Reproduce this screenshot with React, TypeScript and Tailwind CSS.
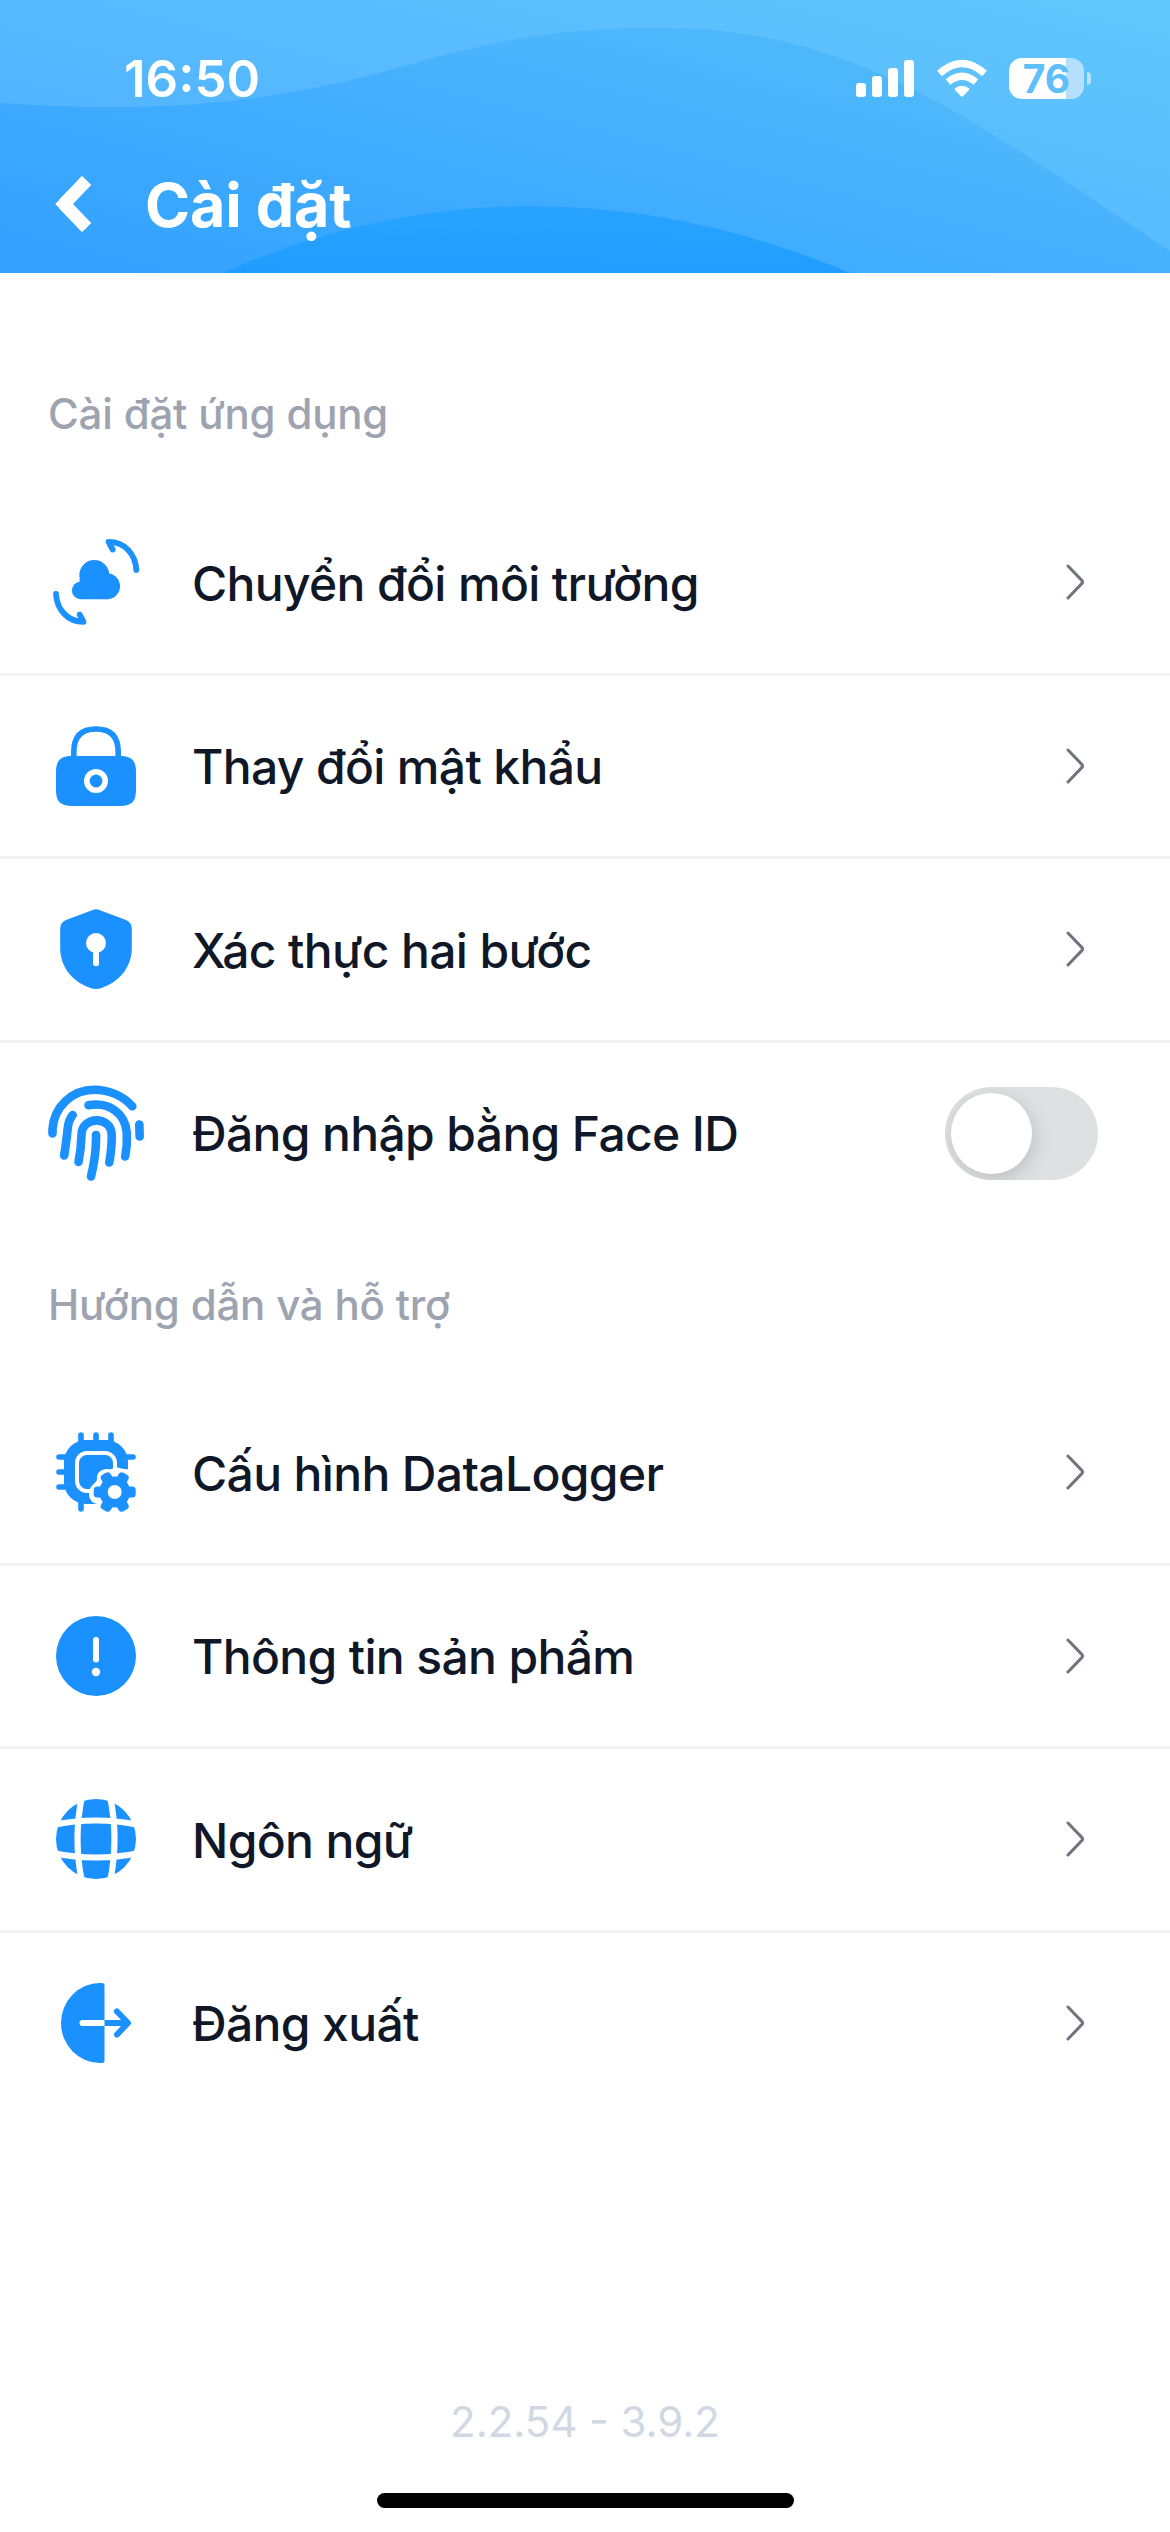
import type { ReactNode } from "react";

interface SettingItem {
  id: string;
  label: string;
  icon: ReactNode;
  toggle?: boolean;
}

interface SettingSection {
  id: string;
  title: string;
  items: SettingItem[];
}

function Icon({ children }: { children: ReactNode }) {
  return (
    <svg viewBox="0 0 96 96" className="size-24 shrink-0 text-[#1b90ff]" fill="currentColor">
      {children}
    </svg>
  );
}

function CloudSwapIcon() {
  return (
    <Icon>
      <circle cx="46.300" cy="41" r="15" />
      <circle cx="59" cy="52.200" r="13" />
      <circle cx="32.700" cy="56.400" r="8.800" />
      <path d="M31.500 45H60V65.200H32.700z" />
      <g fill="none" stroke="currentColor" strokeWidth="5.800" strokeLinecap="round" strokeLinejoin="round">
        <path d="M88.300 36C87.500 19.500 76 7.700 60.500 7.900l4.200 7.600" />
        <path d="M8 59.800C8.800 76 20 87.800 35.500 87.800l-3.800-7.200" />
      </g>
    </Icon>
  );
}

function LockIcon() {
  return (
    <Icon>
      <path d="M25.800 40V34C25.800 17 35 11 48 11s22.200 6 22.200 23v6" fill="none" stroke="currentColor" strokeWidth="5.600" />
      <path d="M24 38H72C84 38 88 43 88 54V72C88 83 84 88 72 88H24C12 88 8 83 8 72V54C8 43 12 38 24 38z" />
      <circle cx="48" cy="63" r="9.200" fill="none" stroke="#fff" strokeWidth="5.600" />
    </Icon>
  );
}

function ShieldIcon() {
  return (
    <Icon>
      <path d="M44 9.200Q48 7.500 52 9.200L78 19Q83.800 21.500 83.800 28V47C83.800 68 69 82 53 87.200Q48 88.800 43 87.200C27 82 12.200 68 12.200 47V28Q12.200 21.500 18 19z" />
      <circle cx="48" cy="42" r="10" fill="#fff" />
      <path d="M48 44V62.200" stroke="#fff" strokeWidth="6" strokeLinecap="round" />
    </Icon>
  );
}

function FingerprintIcon() {
  return (
    <Icon>
      <g fill="none" stroke="currentColor" strokeWidth="8.600" strokeLinecap="round">
        <path d="M4.500 48.500V44C6 22 24 4.700 46 4.700C61 4.700 75 11 84.300 21.300" />
        <path d="M91.300 39.500L91.700 51.500" />
        <path d="M24.700 30C19 37 20 43 19.200 48Q18 59 16.200 70.500" />
        <path d="M40.500 20.200C62 16.500 77.500 29 78.800 48Q79.500 60 77.200 71.500" />
        <path d="M30.500 77C33 65 33.300 59 33.500 50C33.700 30.500 63.500 30.500 63.700 50Q64 62 61.300 77.500" />
        <path d="M48 50C48.500 66 46.500 77 43 91.500" />
      </g>
    </Icon>
  );
}

function ChipIcon() {
  return (
    <Icon>
      <g stroke="currentColor" strokeWidth="5.600" strokeLinecap="round">
        <path d="M33 11v74M48 11v30M63 11v30M11 33h74M11 48h30M11 63h30" />
      </g>
      <path d="M38 16H58A22 22 0 0 1 80 38V80H38A22 22 0 0 1 16 58V38A22 22 0 0 1 38 16z" />
      <rect x="29" y="29" width="38" height="38" rx="10" fill="none" stroke="#fff" strokeWidth="4" />
      <path d="M41 70C41 62 47 60 49 56C48 47 55 45 60 45C64 46 65 44 68 43.500C72 43 75 46 82 45H96V96H49V80C44 79 41 75 41 70z" fill="#fff" />
      <g transform="translate(66.700 68)">
        <circle r="15.500" />
        {[0, 60, 120, 180, 240, 300].map((angle) => (
          <rect key={angle} x="-5.500" y="-21" width="11" height="13" rx="3.500" transform={`rotate(${angle + 30})`} />
        ))}
        <circle r="7" fill="#fff" />
      </g>
    </Icon>
  );
}

function InfoIcon() {
  return (
    <Icon>
      <circle cx="48" cy="48" r="40" />
      <path d="M48 32V51.500" stroke="#fff" strokeWidth="6" strokeLinecap="round" />
      <circle cx="48" cy="64" r="4.200" fill="#fff" />
    </Icon>
  );
}

function GlobeIcon() {
  return (
    <Icon>
      <circle cx="48" cy="48" r="40" />
      <g fill="none" stroke="#fff" strokeWidth="6.200">
        <path d="M34 5Q25 48 34 91M62 5Q71 48 62 91M5 34Q48 25 91 34M5 62Q48 71 91 62" />
      </g>
    </Icon>
  );
}

function LogoutIcon() {
  return (
    <Icon>
      <path d="M52 8H54Q56.500 8 56.500 10.500V85.500Q56.500 88 54 88H52A39 40 0 0 1 52 8z" />
      <path d="M34.500 48H56.500" stroke="#fff" strokeWidth="6" strokeLinecap="round" />
      <path d="M56.500 48H78" stroke="currentColor" strokeWidth="6" />
      <path d="M69 36.500L80 48L69 59.500" fill="none" stroke="currentColor" strokeWidth="6" strokeLinecap="round" strokeLinejoin="round" />
    </Icon>
  );
}

const SECTIONS: SettingSection[] = [
  {
    id: "app",
    title: "Cài đặt ứng dụng",
    items: [
      { id: "environment", label: "Chuyển đổi môi trường", icon: <CloudSwapIcon /> },
      { id: "password", label: "Thay đổi mật khẩu", icon: <LockIcon /> },
      { id: "two-factor", label: "Xác thực hai bước", icon: <ShieldIcon /> },
      { id: "face-id", label: "Đăng nhập bằng Face ID", icon: <FingerprintIcon />, toggle: true },
    ],
  },
  {
    id: "support",
    title: "Hướng dẫn và hỗ trợ",
    items: [
      { id: "datalogger", label: "Cấu hình DataLogger", icon: <ChipIcon /> },
      { id: "product", label: "Thông tin sản phẩm", icon: <InfoIcon /> },
      { id: "language", label: "Ngôn ngữ", icon: <GlobeIcon /> },
      { id: "logout", label: "Đăng xuất", icon: <LogoutIcon /> },
    ],
  },
];

function HeaderWaves() {
  return (
    <svg viewBox="0 0 1170 273" className="absolute inset-0 size-full" preserveAspectRatio="none">
      <defs>
        <linearGradient id="sky" gradientUnits="userSpaceOnUse" x1="0" y1="130" x2="107" y2="-299">
          <stop offset="0" stopColor="#51b3ff" />
          <stop offset="1" stopColor="#62c9fb" />
        </linearGradient>
        <linearGradient id="mid" gradientUnits="userSpaceOnUse" x1="0" y1="270" x2="97" y2="-105">
          <stop offset="0" stopColor="#33a0ff" />
          <stop offset="0.500" stopColor="#3eabfe" />
          <stop offset="1" stopColor="#4db7fc" />
        </linearGradient>
        <linearGradient id="low" x1="0" y1="1" x2="0.200" y2="0">
          <stop offset="0" stopColor="#1f9cff" />
          <stop offset="1" stopColor="#27a3ff" />
        </linearGradient>
      </defs>
      <path d="M0 0H1170V273H0z" fill="url(#sky)" />
      <path d="M0 103C130 112 250 109 390 70C500 38 560 28 660 28C850 28 960 110 1170 251V273H0z" fill="url(#mid)" />
      <path d="M223 273C420 184 640 184 850 273z" fill="url(#low)" />
    </svg>
  );
}

function StatusBar() {
  return (
    <div className="flex h-[156px] items-center justify-between pl-[124px] pr-[79px]">
      <span className="text-[51px] font-semibold leading-none">16:50</span>
      <div className="flex items-center">
        <svg viewBox="0 0 58 37" className="h-[37px] w-[58px]" fill="currentColor">
          <rect x="0" y="23" width="10" height="14" rx="3" />
          <rect x="16" y="16" width="10" height="21" rx="3" />
          <rect x="32" y="8" width="10" height="29" rx="3" />
          <rect x="48" y="0" width="10" height="37" rx="3" />
        </svg>
        <svg viewBox="0 0 50 37" className="ml-[23px] h-[37px] w-[50px]" fill="currentColor">
          <path d="M24 36.300L18 30Q17.200 28.800 18.500 28Q25 23.500 31.500 28Q32.800 28.800 32 30L26 36.300Q25 37.200 24 36.300z" />
          <g fill="none" stroke="currentColor" strokeWidth="7.200">
            <path d="M11 22Q25 10.500 39 22" />
            <path d="M2.500 13.500Q25-6.500 47.500 13.500" />
          </g>
        </svg>
        <div className="ml-[22px] flex h-[41px] w-[75px] items-center justify-center rounded-[13px] bg-[linear-gradient(90deg,#fff_76%,#b5e0fd_76%)] text-[39px] font-bold leading-none text-[#5fbffb]">
          76
        </div>
        <div className="ml-[3px] h-[13px] w-[4px] rounded-r-full bg-white/55" />
      </div>
    </div>
  );
}

function Toggle() {
  return (
    <button
      type="button"
      role="switch"
      aria-checked={false}
      className="mt-[2px] flex h-[93px] w-[153px] items-center overflow-hidden rounded-full bg-[#dfe0e2] pl-1.5"
    >
      <span className="size-[81px] rounded-full bg-white shadow-[2px_5px_18px_rgba(60,60,75,0.2)]" />
    </button>
  );
}

function Chevron() {
  return (
    <svg viewBox="0 0 20 36" className="mr-3 h-9 w-5" fill="none" stroke="#70747e" strokeWidth="3">
      <path d="M2 2L16 16.600Q17.200 18 16 19.400L2 34" strokeLinecap="round" strokeLinejoin="round" />
    </svg>
  );
}

function SettingRow({ item }: { item: SettingItem }) {
  return (
    <li className="flex h-[183.5px] items-center border-b-[3px] border-[#f3f3f3] pl-12 pr-[72px] last:border-transparent">
      {item.icon}
      <span className="ml-12 flex-1 pt-[3px] text-[48px] font-medium tracking-[-0.65px] text-[#101828]">
        {item.label}
      </span>
      {item.toggle ? <Toggle /> : <Chevron />}
    </li>
  );
}

export default function App() {
  return (
    <div className="flex h-[2532px] w-[1170px] flex-col overflow-hidden bg-white font-['Inter',sans-serif]">
      <header className="relative h-[273px] shrink-0 text-white">
        <HeaderWaves />
        <div className="relative">
          <StatusBar />
          <div className="flex h-24 items-center pl-[55px]">
            <svg viewBox="0 0 37 58" className="h-[58px] w-[37px]" fill="none" stroke="currentColor" strokeWidth="13">
              <path d="M31.500 5.500L9 29L31.500 52.500" strokeLinejoin="bevel" />
              <path d="M31.500 5.500L8 29L31.500 52.500" strokeWidth="11" />
            </svg>
            <h1 className="ml-[53px] pt-[3px] text-[61px] font-bold leading-none tracking-[-0.2px]">Cài đặt</h1>
          </div>
        </div>
      </header>

      <main className="flex-1">
        {SECTIONS.map((section, i) => (
          <section key={section.id}>
            <h2
              className={
                i === 0
                  ? "flex h-[219px] items-center pl-12 pt-[62px] text-[42px] font-medium tracking-[-0.2px] text-[#9ea3b0]"
                  : "flex h-[156px] items-center pl-12 text-[42px] font-medium tracking-[-0.2px] text-[#9ea3b0]"
              }
            >
              {section.title}
            </h2>
            <ul>
              {section.items.map((item) => (
                <SettingRow key={item.id} item={item} />
              ))}
            </ul>
          </section>
        ))}
      </main>

      <footer className="flex flex-col items-center pb-6">
        <p className="text-[42px] leading-[60px] text-[#d0d8e3]">2.2.54 - 3.9.2</p>
        <div className="mt-[41px] h-[15px] w-[417px] rounded-full bg-black" />
      </footer>
    </div>
  );
}
